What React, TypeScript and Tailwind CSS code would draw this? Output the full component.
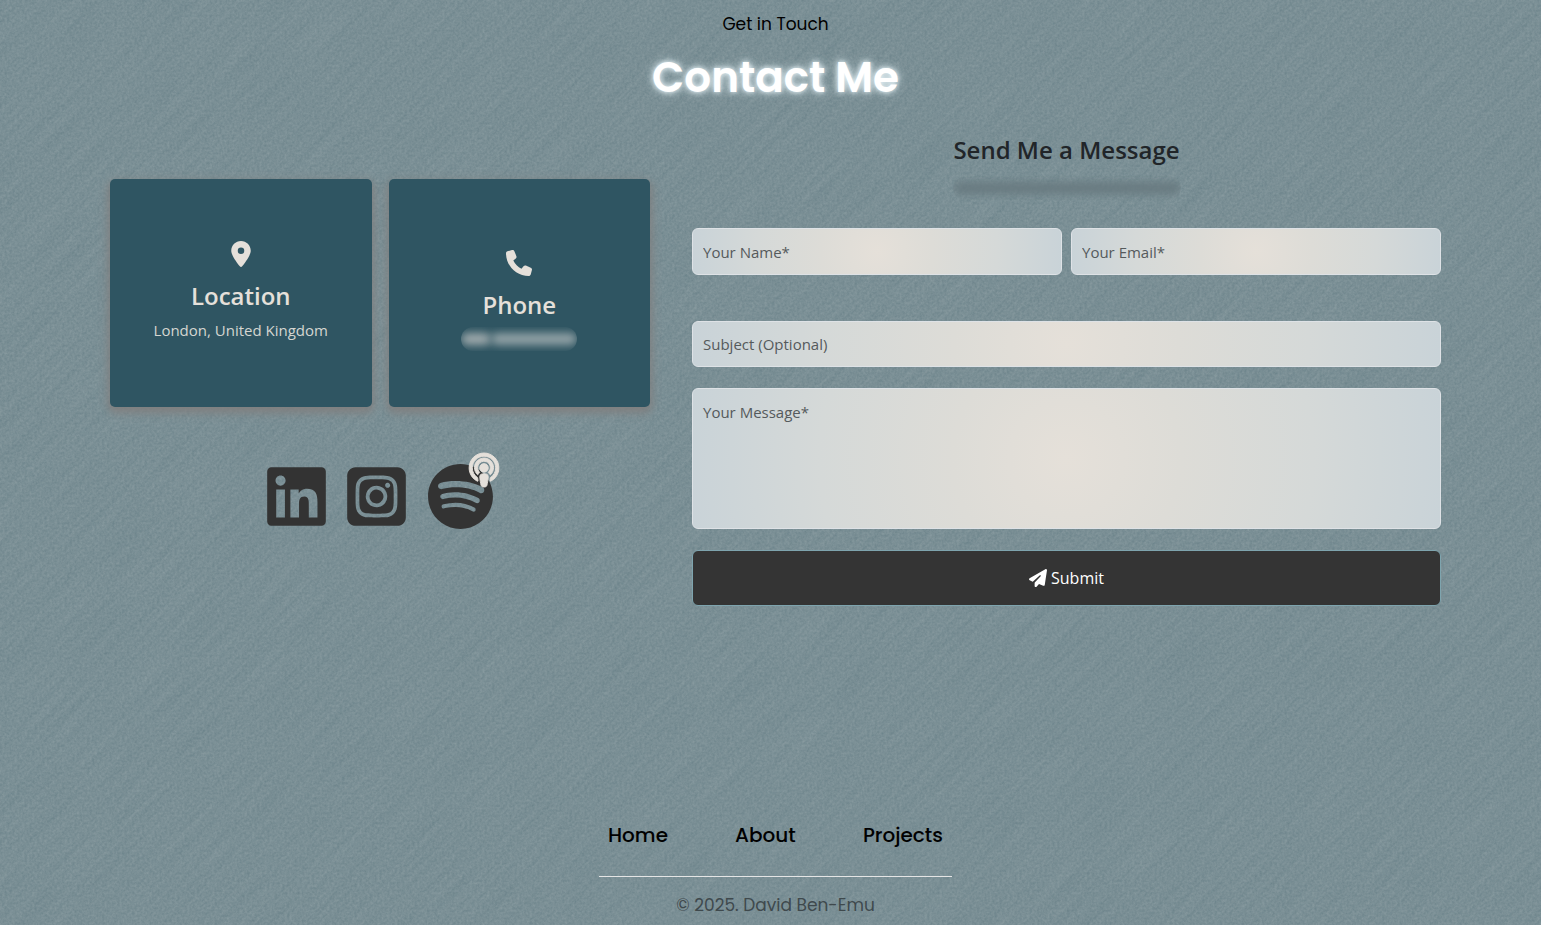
import React from "react";
import { FaPodcast } from "react-icons/fa";
import {
  FaLinkedin,
  FaLocationDot,
  FaPaperPlane,
  FaPhone,
  FaSpotify,
  FaSquareInstagram,
} from "react-icons/fa6";

const fieldClass =
  "block w-full rounded-md border border-[#dee2e6] bg-[radial-gradient(circle,#e5e0d9_0%,#dddcd7_30%,#d5d9d8_65%,#c9d3d8_100%)] px-[10px] text-[15px] text-[#212529] placeholder:text-[#555a5c] placeholder:opacity-100 outline-none focus:border-white";

function Texture() {
  return (
    <svg className="pointer-events-none absolute inset-0 -z-10 h-full w-full" aria-hidden="true">
      <filter id="grain" x="0" y="0" width="100%" height="100%" colorInterpolationFilters="sRGB">
        <feTurbulence type="fractalNoise" baseFrequency="0.4" numOctaves="3" seed="4" />
        <feColorMatrix values="0.12 0 0 0 0.421  0.1 0 0 0 0.512  0.09 0 0 0 0.541  0 0 0 0 1" />
      </filter>
      <filter id="streaks" x="0" y="0" width="100%" height="100%" colorInterpolationFilters="sRGB">
        <feTurbulence type="fractalNoise" baseFrequency="0.012 0.22" numOctaves="3" seed="9" />
        <feColorMatrix values="0.6 0 0 0 0.179  0.48 0 0 0 0.322  0.44 0 0 0 0.366  0 0 0 0 1" />
      </filter>
      <rect width="100%" height="100%" filter="url(#grain)" />
      <g transform="rotate(-45)" opacity="0.08">
        <rect x="-1400" y="-200" width="3400" height="2600" filter="url(#streaks)" />
      </g>
    </svg>
  );
}

function ContactCard({
  icon,
  title,
  className,
  children,
}: {
  icon: React.ReactNode;
  title: string;
  className?: string;
  children: React.ReactNode;
}) {
  return (
    <article
      className={`flex h-[228px] flex-1 flex-col items-center justify-center rounded-[5px] bg-[#2f5562] text-[#e5e0da] shadow-[0_4px_8px_2px_#808080] ${className ?? ""}`}
    >
      {icon}
      <h3 className="mt-[11px] text-[24px] leading-9 font-semibold">{title}</h3>
      <div className="mt-1 text-[15px] leading-6 text-[#d5d6d1]">{children}</div>
    </article>
  );
}

export default function App() {
  return (
    <div className="relative isolate flex min-h-screen flex-col overflow-hidden bg-[#7a8f96] pr-[100px] pl-[110px] font-['Open_Sans','Noto_Sans',sans-serif]">
      <Texture />

      <header className="pt-3 text-center font-['Poppins','Inter',sans-serif]">
        <p className="text-[17px] leading-6 text-black">Get in Touch</p>
        <h1 className="mt-3 text-[42px] leading-[60px] font-semibold text-white [text-shadow:0_0_5px_#e8f4f8,0_0_10px_#d5e4e9]">
          Contact Me
        </h1>
      </header>

      <main className="mt-6 grid grid-cols-[540fr_749fr] gap-[42px]">
        <section aria-label="Contact details" className="pt-[47px]">
          <div className="flex gap-[17px]">
            <ContactCard icon={<FaLocationDot className="h-[26px] w-5" />} title="Location" className="pb-1">
              London, United Kingdom
            </ContactCard>
            <ContactCard icon={<FaPhone className="size-[26px]" />} title="Phone" className="pt-[14px]">
              <div role="img" aria-label="Phone number hidden" className="flex h-6 w-[116px] items-center overflow-hidden rounded-full">
                <span className="h-3 w-[30px] rounded-full bg-[#a0abad] blur-[4px]" />
                <span className="h-3 flex-1 rounded-full bg-[#93a3a7] blur-[4px]" />
              </div>
            </ContactCard>
          </div>
          <nav aria-label="Social links" className="mt-[56px] flex items-center justify-center gap-[21px] text-[#333333]">
            <a href="#linkedin" aria-label="LinkedIn">
              <FaLinkedin className="h-[67px] w-[59px]" />
            </a>
            <a href="#instagram" aria-label="Instagram">
              <FaSquareInstagram className="h-[67px] w-[59px]" />
            </a>
            <a href="#podcast" aria-label="Podcast on Spotify" className="relative">
              <FaSpotify className="size-[67px]" />
              <FaPodcast className="absolute -top-[10px] -right-[5px] h-[34px] w-[30px] overflow-visible stroke-[#e5e0da] stroke-[14px] text-[#e5e0da]" />
            </a>
          </nav>
        </section>

        <section aria-labelledby="message-title">
          <h2 id="message-title" className="text-center text-[24px] leading-9 font-semibold text-[#212529]">
            Send Me a Message
          </h2>
          <div role="img" aria-label="Email address hidden" className="mx-auto mt-2 flex h-6 w-[228px] items-center overflow-hidden rounded-full">
            <span className="h-3 flex-1 rounded-full bg-[#687a80] blur-[4px]" />
          </div>
          <form className="mt-7" onSubmit={(e) => e.preventDefault()}>
            <div className="flex gap-[9px]">
              <input type="text" name="name" aria-label="Your Name" placeholder="Your Name*" className={`${fieldClass} h-[47px]`} />
              <input type="email" name="email" aria-label="Your Email" placeholder="Your Email*" className={`${fieldClass} h-[47px]`} />
            </div>
            <input type="text" name="subject" aria-label="Subject" placeholder="Subject (Optional)" className={`${fieldClass} mt-[46px] h-[46px]`} />
            <textarea name="message" aria-label="Your Message" placeholder="Your Message*" className={`${fieldClass} mt-[21px] h-[141px] resize-none py-[11px] leading-6`} />
            <button
              type="submit"
              className="mt-[21px] flex h-[56px] w-full items-center justify-center gap-1 rounded-md border border-[#7ea4ae] bg-[#343434] text-[16px] font-medium text-white"
            >
              <FaPaperPlane className="size-[18px]" />
              Submit
            </button>
          </form>
        </section>
      </main>

      <footer className="mt-auto flex flex-col items-center pb-2 font-['Poppins','Inter',sans-serif]">
        <nav aria-label="Footer" className="flex w-[353px] justify-between border-b border-[#e5e5e5] px-[9px] pb-[26px] text-[20px] leading-[30px] font-medium text-black">
          <a href="#home">Home</a>
          <a href="#about">About</a>
          <a href="#projects">Projects</a>
        </nav>
        <p className="mt-4 text-[17px] leading-6 text-[#3f494d]">© 2025. David Ben-Emu</p>
      </footer>
    </div>
  );
}
